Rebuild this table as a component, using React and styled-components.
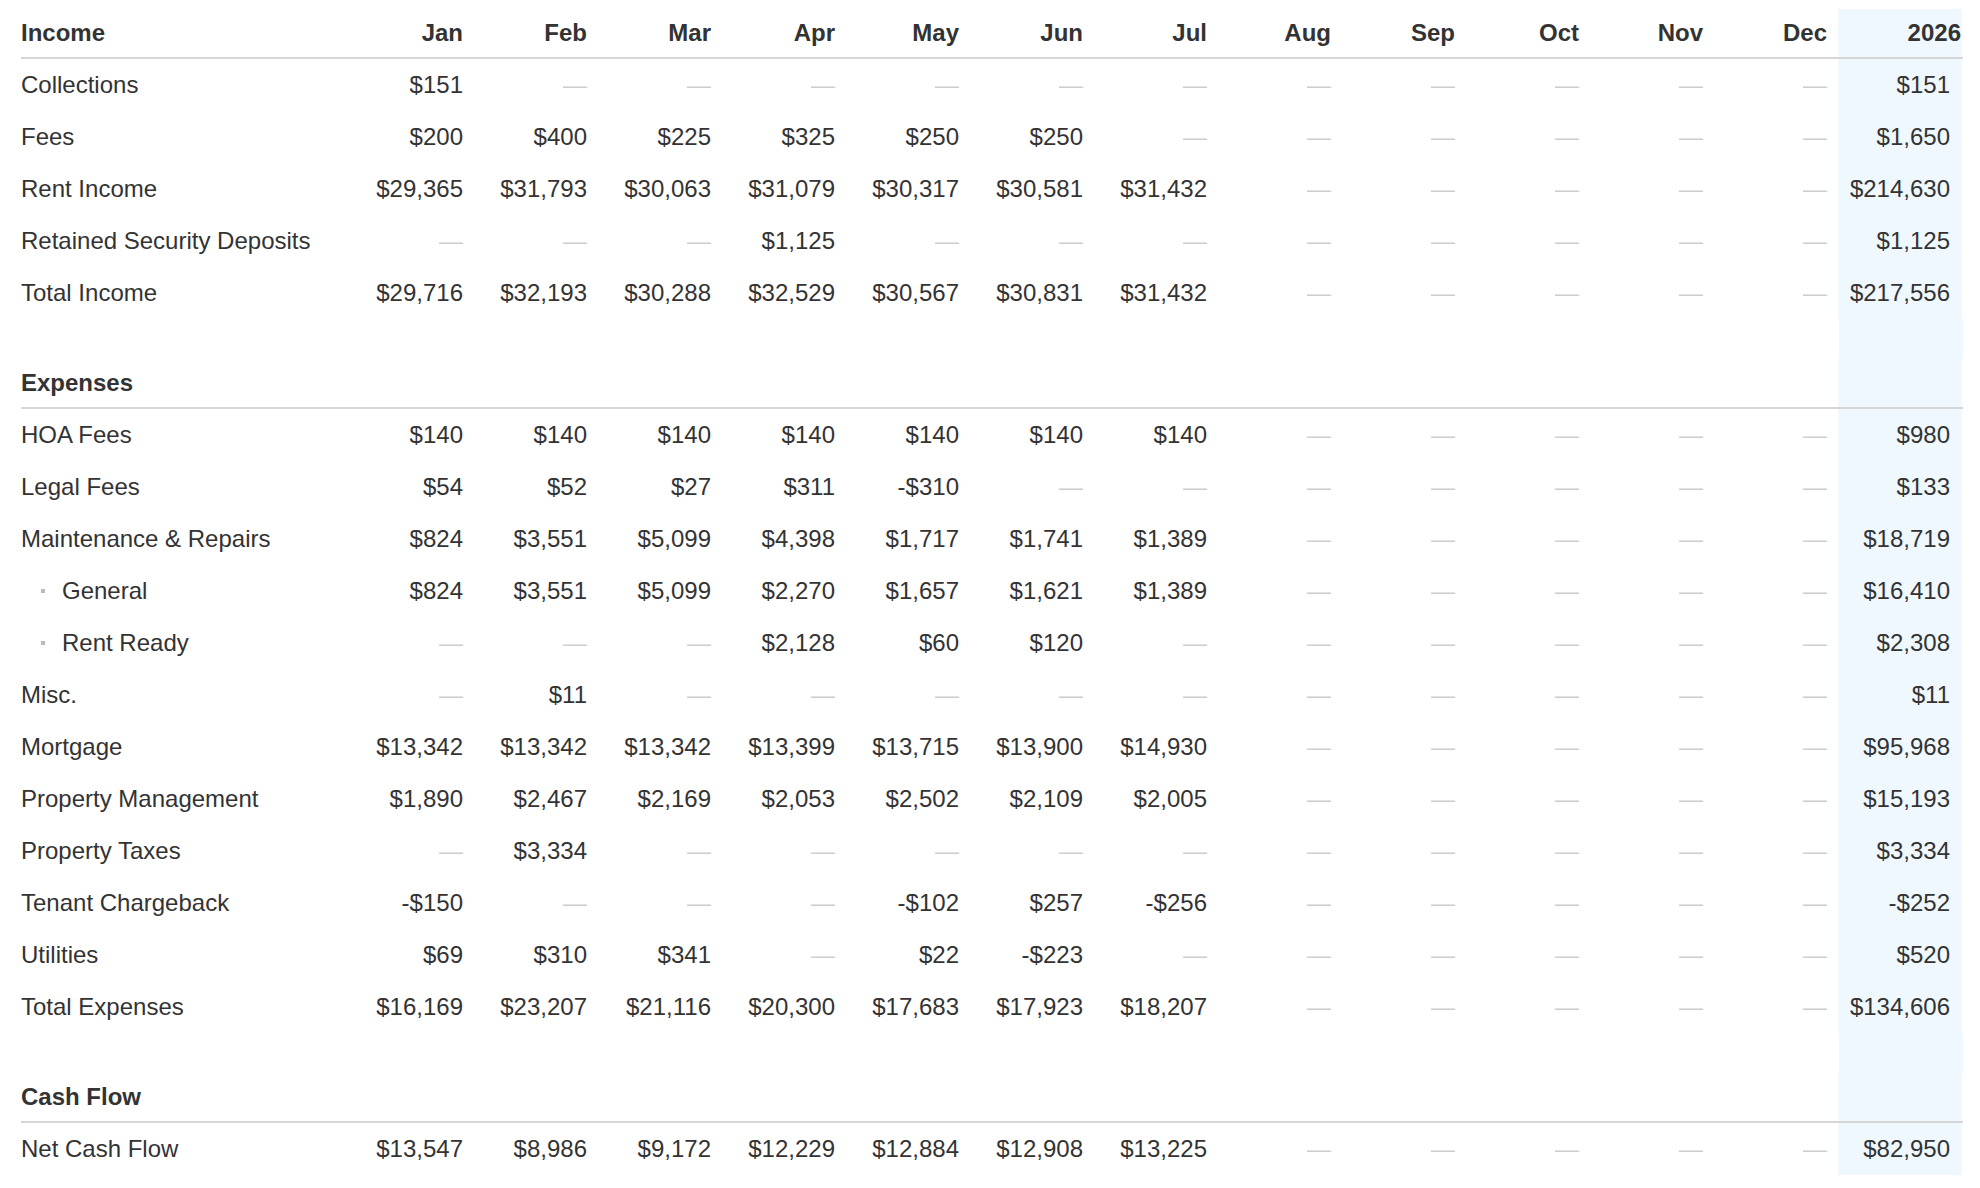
import React from 'react'
import styled, {createGlobalStyle} from 'styled-components'

const MONTHS = ['Jan', 'Feb', 'Mar', 'Apr', 'May', 'Jun', 'Jul', 'Aug', 'Sep', 'Oct', 'Nov', 'Dec']

const SECTIONS = [
    {
        title: 'Income',
        rows: [
            {label: 'Collections', values: ['$151'], total: '$151'},
            {label: 'Fees', values: ['$200', '$400', '$225', '$325', '$250', '$250'], total: '$1,650'},
            {label: 'Rent Income', values: ['$29,365', '$31,793', '$30,063', '$31,079', '$30,317', '$30,581', '$31,432'], total: '$214,630'},
            {label: 'Retained Security Deposits', values: [null, null, null, '$1,125'], total: '$1,125'},
            {label: 'Total Income', values: ['$29,716', '$32,193', '$30,288', '$32,529', '$30,567', '$30,831', '$31,432'], total: '$217,556'},
        ]
    },
    {
        title: 'Expenses',
        rows: [
            {label: 'HOA Fees', values: ['$140', '$140', '$140', '$140', '$140', '$140', '$140'], total: '$980'},
            {label: 'Legal Fees', values: ['$54', '$52', '$27', '$311', '-$310'], total: '$133'},
            {label: 'Maintenance & Repairs', values: ['$824', '$3,551', '$5,099', '$4,398', '$1,717', '$1,741', '$1,389'], total: '$18,719'},
            {label: 'General', sub: true, values: ['$824', '$3,551', '$5,099', '$2,270', '$1,657', '$1,621', '$1,389'], total: '$16,410'},
            {label: 'Rent Ready', sub: true, values: [null, null, null, '$2,128', '$60', '$120'], total: '$2,308'},
            {label: 'Misc.', values: [null, '$11'], total: '$11'},
            {label: 'Mortgage', values: ['$13,342', '$13,342', '$13,342', '$13,399', '$13,715', '$13,900', '$14,930'], total: '$95,968'},
            {label: 'Property Management', values: ['$1,890', '$2,467', '$2,169', '$2,053', '$2,502', '$2,109', '$2,005'], total: '$15,193'},
            {label: 'Property Taxes', values: [null, '$3,334'], total: '$3,334'},
            {label: 'Tenant Chargeback', values: ['-$150', null, null, null, '-$102', '$257', '-$256'], total: '-$252'},
            {label: 'Utilities', values: ['$69', '$310', '$341', null, '$22', '-$223'], total: '$520'},
            {label: 'Total Expenses', values: ['$16,169', '$23,207', '$21,116', '$20,300', '$17,683', '$17,923', '$18,207'], total: '$134,606'},
        ]
    },
    {
        title: 'Cash Flow',
        rows: [
            {label: 'Net Cash Flow', values: ['$13,547', '$8,986', '$9,172', '$12,229', '$12,884', '$12,908', '$13,225'], total: '$82,950'},
        ]
    }
]

const Section = ({section, first}) => {
    return (
        <>
            {!first && (
                <Spacer>
                    <TotalBlank/>
                </Spacer>
            )}
            <HeadRow>
                <HeadLabel>{section.title}</HeadLabel>
                {MONTHS.map(m => <HeadCell key={m}>{first ? m : ''}</HeadCell>)}
                <HeadTotal>{first ? '2026' : ''}</HeadTotal>
            </HeadRow>
            {section.rows.map(row => (
                <Row key={row.label}>
                    <Label sub={row.sub}>
                        {row.sub && <Bullet/>}
                        {row.label}
                    </Label>
                    {MONTHS.map((m, i) => {
                        const v = row.values[i]
                        return v ? <Cell key={m}>{v}</Cell> : <Cell key={m}><Dash>—</Dash></Cell>
                    })}
                    <TotalCell>{row.total}</TotalCell>
                </Row>
            ))}
        </>
    )
}

const App = () => {
    return (
        <Page>
            <GlobalStyle/>
            <Table>
                {SECTIONS.map((s, i) => <Section key={s.title} section={s} first={i === 0}/>)}
            </Table>
        </Page>
    )
}

export default App


const GlobalStyle = createGlobalStyle`
    html, body {
        margin: 0;
        padding: 0;
        background: #fff;
    }
    body {
        font-family: "Liberation Sans", Arial, Helvetica, sans-serif;
        color: #333;
    }
`

const Page = styled.div`
    padding: 9px 17px 0 21px;
`

const Table = styled.div`
    width: 1942px;
    display: flex;
    flex-direction: column;
`

const COLS = '329px repeat(12, 124px) 124px'

const Row = styled.div`
    display: grid;
    grid-template-columns: ${COLS};
    height: 52px;
    font-size: 24px;
    line-height: 52px;
`

const HeadRow = styled.div`
    display: grid;
    grid-template-columns: ${COLS};
    height: 48px;
    border-bottom: 2px solid #d6d6d6;
    font-size: 24px;
    font-weight: bold;
    line-height: 48px;
`

const Spacer = styled.div`
    display: grid;
    grid-template-columns: 1818px 124px;
    height: 40px;
`

const TotalBlank = styled.div`
    grid-column: 2;
    background: #f0f8ff;
`

const HeadLabel = styled.div`
    text-align: left;
`

const HeadCell = styled.div`
    text-align: right;
    padding-right: 11px;
`

const HeadTotal = styled.div`
    text-align: right;
    padding-right: 1px;
    background: #f0f8ff;
`

const Label = styled.div`
    display: flex;
    align-items: center;
    white-space: nowrap;
    padding-left: ${props => props.sub ? '20px' : '0'};
`

const Bullet = styled.span`
    display: inline-block;
    width: 4px;
    height: 4px;
    background: #bbb;
    margin-right: 17px;
`

const Cell = styled.div`
    text-align: right;
    padding-right: 11px;
    white-space: nowrap;
`

const TotalCell = styled(Cell)`
    padding-right: 12px;
    background: #f0f8ff;
`

const Dash = styled.span`
    color: #cfcfcf;
`
